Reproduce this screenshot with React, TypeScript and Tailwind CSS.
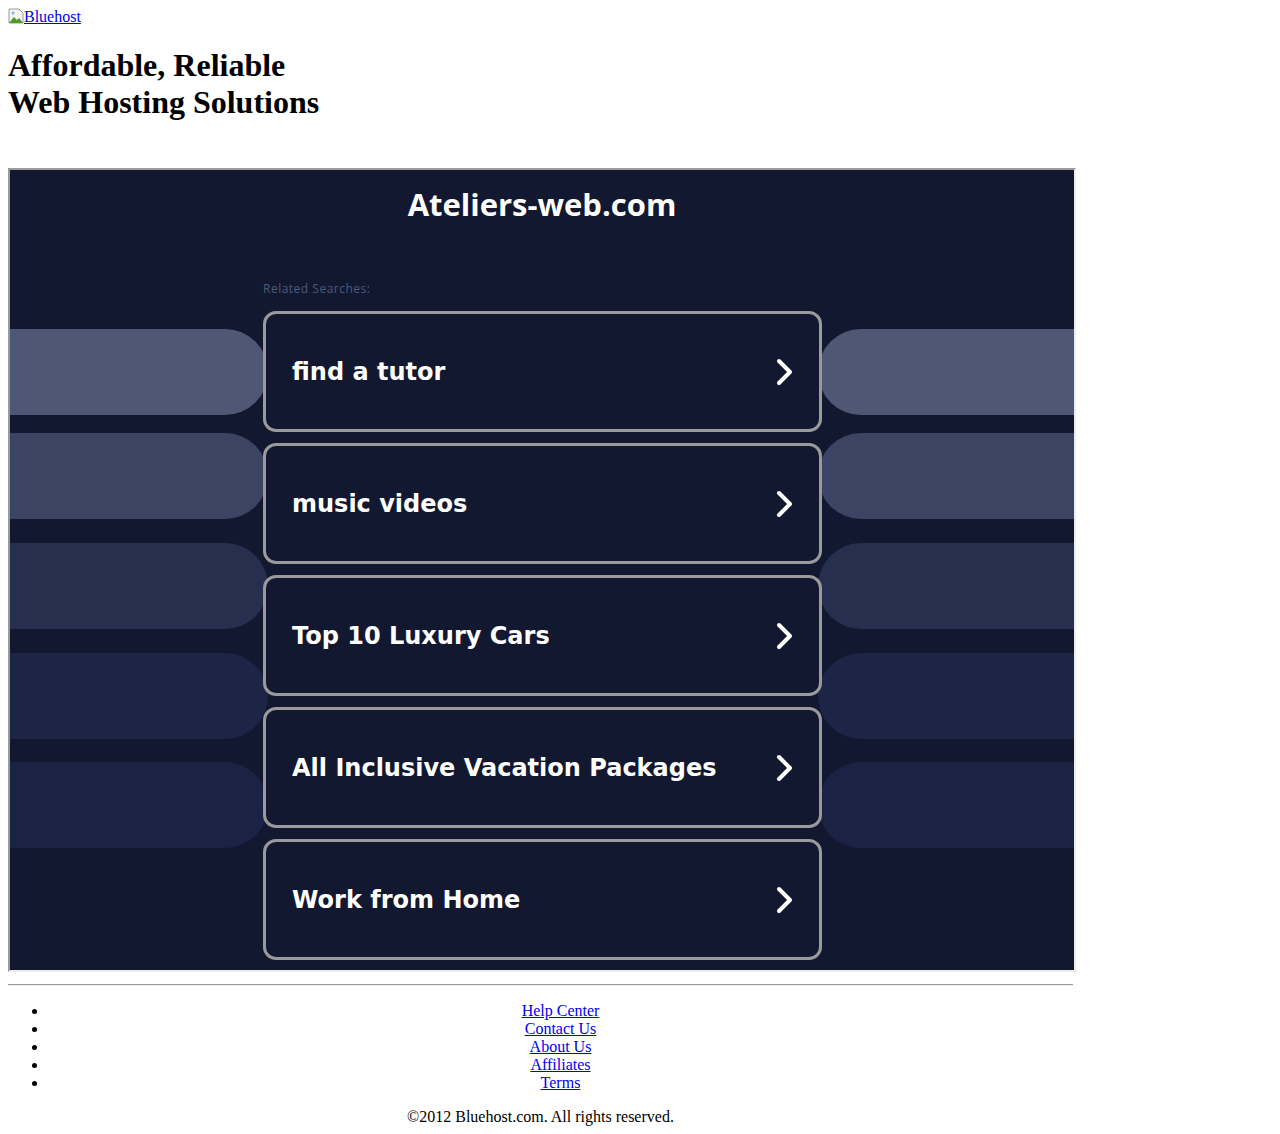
const searches = [
  "find a tutor",
  "music videos",
  "Top 10 Luxury Cars",
  "All Inclusive Vacation Packages",
  "Work from Home",
];

// decorative side bands: top gap (px) and colour
const bands = [
  { gap: "mt-[18px]", color: "bg-[#4e5773]" },
  { gap: "mt-[18px]", color: "bg-[#3c4463]" },
  { gap: "mt-[24px]", color: "bg-[#272f4f]" },
  { gap: "mt-[24px]", color: "bg-[#1d2547]" },
  { gap: "mt-[23px]", color: "bg-[#1b2345]" },
];

const footerLinks = ["Help Center", "Contact Us", "About Us", "Affiliates", "Terms"];

function Chevron() {
  return (
    <svg width="22" height="30" viewBox="0 0 22 30" fill="none">
      <polyline
        points="6,4 17,15 6,26"
        stroke="#fff"
        strokeWidth="4"
        strokeLinecap="round"
        strokeLinejoin="round"
      />
    </svg>
  );
}

function BrokenImage() {
  return (
    <svg width="16" height="16" viewBox="0 0 16 16" className="inline-block align-[-2px]">
      <path d="M1 1h10l4 4v10H1z" fill="#f4f4f4" stroke="#9a9a9a" />
      <path d="M1 15l5-6 3 3 2-2 4 5z" fill="#4e9a2a" />
      <circle cx="5" cy="5" r="1.5" fill="#7fb2e5" />
    </svg>
  );
}

export default function App() {
  return (
    <div className="p-[8px] bg-white text-black font-['Liberation_Serif',serif] text-[16px] leading-[18px]">
      <div className="w-[1065px]">
        <a href="#" className="text-[#0000ee] underline">
          <BrokenImage />Bluehost
        </a>

        <h1 className="mt-[21px] mb-[47px] text-[32px] leading-[37px] font-bold">
          Affordable, Reliable
          <br />
          Web Hosting Solutions
        </h1>

        {/* parked domain frame */}
        <div className="w-[1068px] h-[804px] border-2 border-t-[#9a9a9a] border-l-[#9a9a9a] border-b-[#eeeeee] border-r-[#eeeeee] bg-[#121830] overflow-hidden font-['Open_Sans',sans-serif]">
          <div className="pt-[14px] h-[60px] text-center text-white text-[31px] leading-[40px] font-bold">
            Ateliers-web.com
          </div>
          <div className="mt-[52px] pl-[253px] text-[12px] leading-[14px] tracking-[0.5px] text-[#4f5979]">
            Related Searches:
          </div>

          <div className="mt-[15px] flex">
            <div className="w-[258px] shrink-0 flex flex-col">
              {bands.map((b, i) => (
                <div key={i} className={`${b.gap} h-[86px] rounded-r-[43px] ${b.color}`} />
              ))}
            </div>

            <div className="ml-[-5px] w-[559px] shrink-0 relative z-10 flex flex-col gap-[11px]">
              {searches.map((s) => (
                <a
                  key={s}
                  href="#"
                  className="h-[121px] flex items-center justify-between pl-[26px] pr-[24px] border-[3px] border-[#9a9a9a] rounded-[13px] bg-[#121830] text-white font-['DejaVu_Sans',sans-serif] font-bold text-[24px]"
                >
                  <span>{s}</span>
                  <Chevron />
                </a>
              ))}
            </div>

            <div className="ml-[-4px] flex-1 flex flex-col">
              {bands.map((b, i) => (
                <div key={i} className={`${b.gap} h-[86px] rounded-l-[43px] ${b.color}`} />
              ))}
            </div>
          </div>
        </div>

        <hr className="mt-[12px] border-0 border-t border-b border-t-[#9a9a9a] border-b-[#eeeeee]" />

        <ul className="mt-[16px] pl-[40px] list-disc">
          {footerLinks.map((l) => (
            <li key={l} className="text-center">
              <a href="#" className="text-[#0000ee] underline">
                {l}
              </a>
            </li>
          ))}
        </ul>

        <p className="mt-[16px] text-center">©2012 Bluehost.com. All rights reserved.</p>
      </div>
    </div>
  );
}
